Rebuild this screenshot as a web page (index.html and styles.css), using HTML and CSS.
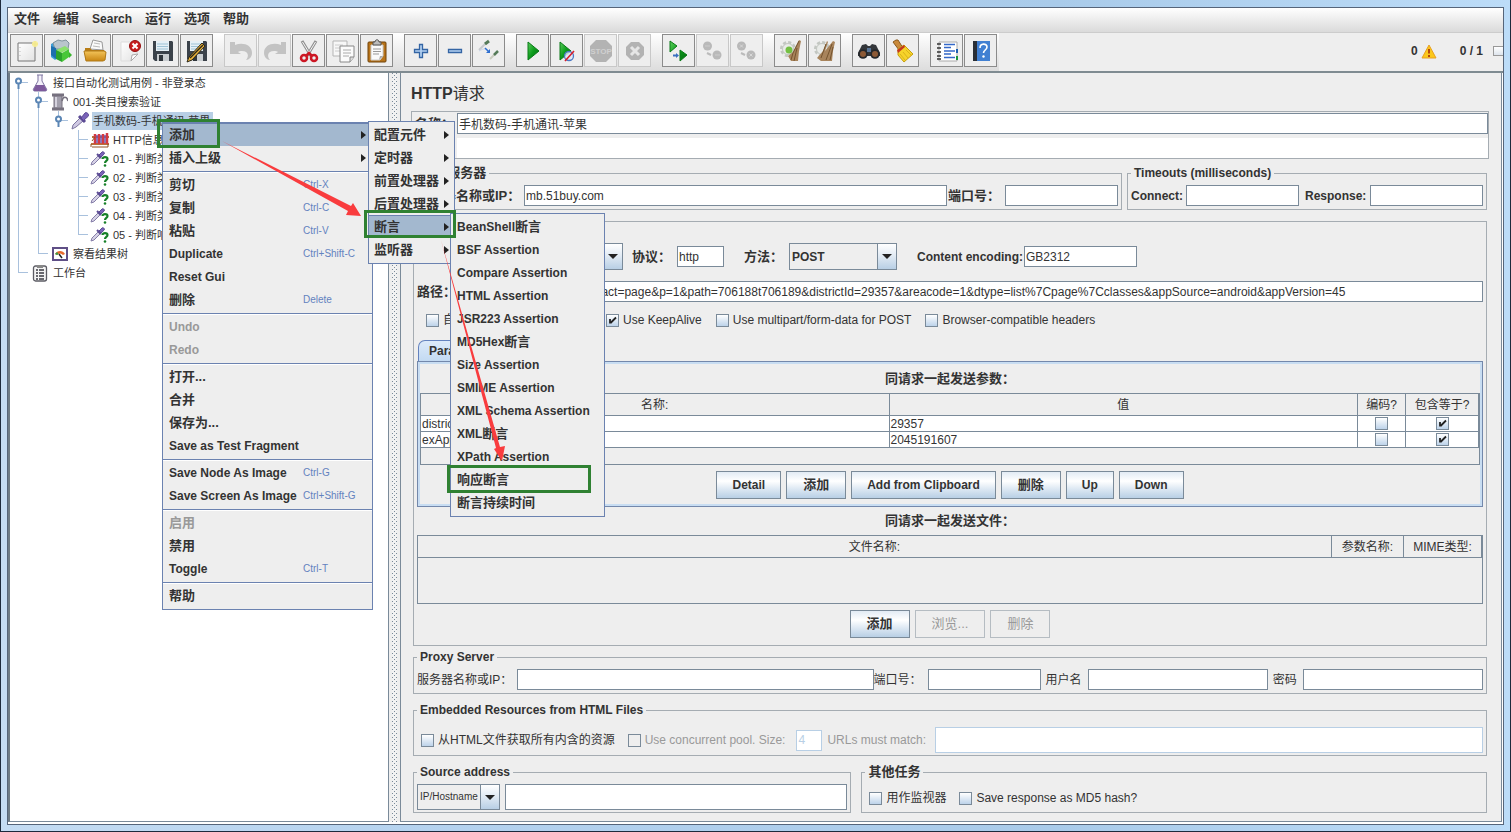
FILE: index.html
```
<!DOCTYPE html>
<html lang="zh-CN">
<head>
<meta charset="utf-8">
<title>HTTP请求</title>
<link rel="stylesheet" href="styles.css">
</head>
<body>
<svg width="0" height="0" class="defs" aria-hidden="true">
  <defs>
    <linearGradient id="gGreen" x1="0" y1="0" x2="1" y2="1"><stop offset="0" stop-color="#5ccf5c"/><stop offset=".5" stop-color="#0c9c1c"/><stop offset="1" stop-color="#056a10"/></linearGradient>
    <linearGradient id="gGold" x1="0" y1="0" x2="0" y2="1"><stop offset="0" stop-color="#f3c45a"/><stop offset="1" stop-color="#c98612"/></linearGradient>
    <linearGradient id="gPaper" x1="0" y1="0" x2="1" y2="1"><stop offset="0" stop-color="#ffffff"/><stop offset="1" stop-color="#e2e2e2"/></linearGradient>
    <symbol id="handle" viewBox="0 0 9 12"><circle cx="4.500" cy="4" r="2.500" fill="#fff" stroke="#5b86b5" stroke-width="2"/><path d="M4.500 7v5" stroke="#5b86b5" stroke-width="2"/></symbol>
    <symbol id="dropper" viewBox="0 0 18 18"><path d="M1 17l1-4 7-7 3 3-7 6z" fill="#cfc8e2" stroke="#7d75a0"/><path d="M8 4l6 6" stroke="#5b4a94" stroke-width="3"/><path d="M10 6l4-5c1-1.500 4.500 1 3.500 3l-5 4.500z" fill="#7a63b8" stroke="#5b4a94"/></symbol>
    <symbol id="assert" viewBox="0 0 20 16"><path d="M1 14l1-3 6-6 2 2-6 6z" fill="#d6d1e6" stroke="#857ea8"/><path d="M7 3l4 4" stroke="#5b4a94" stroke-width="2"/><path d="M9 4l3-3c1-1 3 .5 2.200 2L11 6z" fill="#7a63b8" stroke="#5b4a94"/><path d="M12.500 8c0-2.500 5-2.500 5 0 0 2-2.500 1.800-2.500 4" fill="none" stroke="#178028" stroke-width="2.200"/><circle cx="15" cy="14.500" r="1.300" fill="#178028"/></symbol>
    <symbol id="disk" viewBox="0 0 24 24"><path d="M2 2h19l1 1v19H4l-2-2z" fill="#3b424a"/><path d="M5 2h13v10H5z" fill="#e6f0f6"/><path d="M6 5h11M6 7.500h11M6 10h11" stroke="#9fc3d6"/><path d="M6 15h12v7H6z" fill="#c9cdd0"/><path d="M8 16h4v6H8z" fill="#30363c"/></symbol>
    <symbol id="gear" viewBox="0 0 24 24"><circle cx="9" cy="10" r="6.500" fill="#e4e7e2" stroke="#c3c7c2" stroke-width="3" stroke-dasharray="3 2"/><circle cx="9" cy="10" r="5.500" fill="#e9ebe8" stroke="#c3c7c2"/></symbol>
  </defs>
</svg>
<div class="window">
<div class="app">
  <nav class="menubar">
    <a href="#" class="zh">文件</a><a href="#" class="zh">编辑</a><a href="#">Search</a><a href="#" class="zh">运行</a><a href="#" class="zh">选项</a><a href="#" class="zh">帮助</a>
  </nav>
  <div class="toolbar">
    <div class="tools">
      <div class="group">
        <button aria-label="New"><svg viewBox="0 0 24 24"><path d="M3 4h17v18H3z" fill="url(#gPaper)" stroke="#777"/><path d="M5 8v12" stroke="#bbb" stroke-dasharray="1 3"/><circle cx="20" cy="5" r="3" fill="#f7ee9a"/><path d="M20 2v6M17 5h6" stroke="#f0e58a"/></svg></button>
        <button aria-label="Templates"><svg viewBox="0 0 24 24"><path d="M2 5l6-3 4 2-1 13-5 4-4-3z" fill="#3c9fd8"/><path d="M4 4l5-3 4 1 4-1 3 3-1 6H6z" fill="#b9c5cc" stroke="#7e929c"/><path d="M2 7l5 2v11l-5-4z" fill="#1c6fae"/><path d="M7 11l9-4 4 3-8 4z" fill="#8be06c"/><path d="M7 11l6 3v9l-6-3z" fill="#2ba32c"/><path d="M13 14l7-4v8l-7 5z" fill="#48c738"/><path d="M20 13l3 3-3 3z" fill="#39b52c"/></svg></button>
        <button aria-label="Open"><svg viewBox="0 0 24 24"><path d="M7 10l3-9 9 2 1 8z" fill="#fafafa" stroke="#999"/><path d="M11 4l6 1M10 7l7 1" stroke="#bbb"/><path d="M2 9h5l2 2h12l1 2v8H3l-1-2z" fill="#b87d16"/><path d="M1 12h20l2 1-1 8-2 1H3z" fill="url(#gGold)" stroke="#b07a18"/></svg></button>
        <button aria-label="Close"><svg viewBox="0 0 24 24"><path d="M4 3h16v13l-6 6H4z" fill="url(#gPaper)" stroke="#ddd"/><path d="M14 22l1-6 6-1z" fill="#fff" stroke="#aaa"/><circle cx="18" cy="7" r="5.500" fill="#c81e1e" stroke="#961010"/><path d="M15.500 4.500l5 5m0-5l-5 5" stroke="#fff" stroke-width="2"/></svg></button>
        <button aria-label="Save"><svg viewBox="0 0 24 24"><use href="#disk"/></svg></button>
        <button aria-label="Save as"><svg viewBox="0 0 24 24"><use href="#disk"/><path d="M2 23l2-5L17 4l3 3L7 21z" fill="#e9b23a" stroke="#2d2718"/><path d="M5 19L18 6" stroke="#2d2718" stroke-width="1.500"/></svg></button>
      </div>
      <div class="group">
        <button disabled aria-label="Undo"><svg viewBox="0 0 24 24"><path d="M1 3h5v3c8-3 17 0 17 8 0 4-3 7-6 7 3-3 3-9-4-9-2 0-3 0-4 1l3 2H1z" fill="#c3c3c3"/></svg></button>
        <button disabled aria-label="Redo"><svg viewBox="0 0 24 24"><path d="M23 3h-5v3C10 3 1 6 1 14c0 4 3 7 6 7-3-3-3-9 4-9 2 0 3 0 4 1l-3 2h11z" fill="#c3c3c3"/></svg></button>
        <button aria-label="Cut"><svg viewBox="0 0 24 24"><path d="M5 2l9 15M19 2l-9 15" stroke="#909090" stroke-width="3"/><path d="M5.500 3l8 13M18.500 3l-8 13" stroke="#f5f5f5"/><circle cx="7" cy="19" r="3" fill="none" stroke="#cc1724" stroke-width="2.500"/><circle cx="17" cy="19" r="3" fill="none" stroke="#cc1724" stroke-width="2.500"/><path d="M9 17l3-3 3 3" fill="none" stroke="#cc1724" stroke-width="2.500"/></svg></button>
        <button aria-label="Copy"><svg viewBox="0 0 24 24"><path d="M2 2h14v15H2z" fill="#f7f7f7" stroke="#b5b5b5"/><path d="M4 6h8M4 9h5M4 12h5" stroke="#ccc"/><path d="M9 7h14v11l-4 5H9z" fill="#fbfbfb" stroke="#888"/><path d="M12 11h8M12 14h8M12 17h6" stroke="#aaa"/><path d="M19 23v-5h4" fill="#ddd" stroke="#888"/></svg></button>
        <button aria-label="Paste"><svg viewBox="0 0 24 24"><rect x="3" y="3" width="18" height="20" rx="1" fill="#b8741a" stroke="#70430a"/><path d="M6 6h12v11l-3 4H6z" fill="#fafafa" stroke="#ccc"/><path d="M8 10h8M8 12.500h8M8 15h6" stroke="#999"/><path d="M14 21l1-4h3z" fill="#aaa"/><path d="M8 6V3h2c0-3 4-3 4 0h2v3z" fill="#bbb" stroke="#555"/></svg></button>
      </div>
      <div class="group">
        <button aria-label="Expand"><svg viewBox="0 0 24 24"><path d="M10.500 5.500h3v5h5v3h-5v5h-3v-5h-5v-3h5z" fill="#b4d2f2" stroke="#3465a4" stroke-width="1.300"/></svg></button>
        <button aria-label="Collapse"><svg viewBox="0 0 24 24"><path d="M5.500 10.500h13v3h-13z" fill="#b4d2f2" stroke="#3465a4" stroke-width="1.300"/></svg></button>
        <button aria-label="Toggle"><svg viewBox="0 0 24 24"><path d="M2 11l7-7" stroke="#c6c9cc" stroke-width="2"/><path d="M8 5l4-3" stroke="#557a58" stroke-width="3"/><path d="M2 12c5-3 7-2 9-1" fill="none" stroke="#c9d5e8"/><path d="M8 9l4 4" stroke="#2e6fd0" stroke-width="1.500"/><path d="M13 10v4H9z" fill="#2e6fd0"/><path d="M13 20l5-5" stroke="#c9ccbe" stroke-width="2"/><path d="M17 16l4-4" stroke="#557a58" stroke-width="2.500"/></svg></button>
      </div>
      <div class="group">
        <button aria-label="Start"><svg viewBox="0 0 24 24"><path d="M7 3l11 9-11 9z" fill="url(#gGreen)" stroke="#0a7a18"/></svg></button>
        <button aria-label="Start no pauses"><svg viewBox="0 0 24 24"><path d="M5 3l11 9-11 9z" fill="url(#gGreen)" stroke="#0a7a18"/><circle cx="14" cy="17" r="4.500" fill="#dfe8f8" fill-opacity=".8" stroke="#4a78c4" stroke-width="1.300"/><path d="M10 22l9-10" stroke="#d8202c" stroke-width="1.600"/></svg></button>
        <button disabled aria-label="Stop"><svg viewBox="0 0 24 24"><path d="M7 1h10l6 6v10l-6 6H7l-6-6V7z" fill="#b3b3b3"/><text x="12" y="15" class="stop-text">STOP</text></svg></button>
        <button disabled aria-label="Shutdown"><svg viewBox="0 0 24 24"><path d="M8 3h8l5 5v8l-5 5H8l-5-5V8z" fill="#b3b3b3"/><path d="M8 8l8 8m0-8l-8 8" stroke="#e6e6e6" stroke-width="3"/></svg></button>
      </div>
      <div class="group">
        <button aria-label="Remote start"><svg viewBox="0 0 24 24"><path d="M3 2l7 5-7 6zM13 11l7 5-7 6z" fill="url(#gGreen)" stroke="#0a7a18"/><path d="M6 16.500h4" stroke="#3a6fc0" stroke-width="2"/><path d="M9 14l3 2.500L9 19z" fill="#3a6fc0"/></svg></button>
        <button disabled aria-label="Remote stop"><svg viewBox="0 0 24 24"><circle cx="6.500" cy="7" r="4.500" fill="#b9b9b9"/><circle cx="16" cy="16" r="4.500" fill="#b9b9b9"/><path d="M4 7h5M14 16h5" stroke="#ccc"/><path d="M6 14l4 2" stroke="#bbb" stroke-width="2"/></svg></button>
        <button disabled aria-label="Remote shutdown"><svg viewBox="0 0 24 24"><circle cx="6.500" cy="7" r="4.500" fill="#b9b9b9"/><circle cx="16" cy="16" r="4.500" fill="#b9b9b9"/><path d="M5 5.500l3 3m0-3l-3 3M14.500 14.500l3 3m0-3l-3 3" stroke="#d8d8d8"/><path d="M6 14l4 2" stroke="#bbb" stroke-width="2"/></svg></button>
      </div>
      <div class="group">
        <button aria-label="Clear"><svg viewBox="0 0 24 24"><use href="#gear"/><circle cx="10" cy="11" r="3.500" fill="#74c043"/><path d="M20 1l2 1-2 10-1 10h-7l-3-5 5-4z" fill="#a8845c"/><path d="M20 2l-6 12-2 7M18 9l-3 13" stroke="#75542f" fill="none"/></svg></button>
        <button aria-label="Clear all"><svg viewBox="0 0 24 24"><use href="#gear"/><path d="M14 2l1 1-3 9 8-10 2 1-2 9-1 10H8l-4-3 6-7z" fill="#a8845c"/><path d="M13 5l-5 14M19 5l-6 16M20 8l-3 13" stroke="#75542f" fill="none"/></svg></button>
      </div>
      <div class="group">
        <button aria-label="Search"><svg viewBox="0 0 24 24"><path d="M5 6l4-1 2 2h2l2-2 4 1 4 8v3H1v-3z" fill="#33363a"/><circle cx="6" cy="15" r="4.800" fill="#26282b"/><circle cx="18" cy="15" r="4.800" fill="#26282b"/><circle cx="6" cy="15" r="3" fill="#8d5a36"/><circle cx="18" cy="15" r="3" fill="#8d5a36"/><path d="M10 9h4v4h-4z" fill="#5b7698"/></svg></button>
        <button aria-label="Reset search"><svg viewBox="0 0 24 24"><path d="M2 3l3-2h2l5 8-4 2z" fill="#c98a3c" stroke="#8a5a1c"/><path d="M7 10l6-4 9 9-9 8-6-7z" fill="#f6d32a" stroke="#c79f0e"/><path d="M6 11l7-5 1 2-7 6z" fill="#c4391e"/><path d="M12 13l5 6M15 11l5 5M9 15l5 6" stroke="#d9b31c"/></svg></button>
      </div>
      <div class="group">
        <button aria-label="Function helper"><svg viewBox="0 0 24 24"><path d="M4 3h18v19H4z" fill="#fff" stroke="#aaa"/><path d="M9 5.500h11M9 8.500h7M9 12h11M9 15h7M9 18.500h11" stroke="#3468c8" stroke-width="1.300"/><path d="M2 5h4M2 9h4M2 13h4M2 17h4M2 20h4" stroke="#333" stroke-width="1.500"/><path d="M22 10v4" stroke="#1d5fb2" stroke-width="2"/><path d="M22 17v4" stroke="#1a963c" stroke-width="2"/></svg></button>
        <button aria-label="Help"><svg viewBox="0 0 24 24"><path d="M4 2h17v20H4z" fill="#4180d2"/><path d="M4 2h4v20H4z" fill="#2a2f36"/><path d="M11 9c0-5 7-5 7-1 0 3-3.500 3-3.500 6" fill="none" stroke="#fff" stroke-width="1.600"/><circle cx="14.500" cy="17.500" r="1.200" fill="#fff"/></svg></button>
      </div>
    </div>
    <div class="status">
      <span>0</span>
      <svg class="warn" viewBox="0 0 16 16"><path d="M8 2l7 13H1z" fill="#fbc81a" stroke="#e8a020"/><path d="M8 6v4.500M8 12v2" stroke="#b5480c" stroke-width="2"/></svg>
      <span class="count">0 / 1</span>
      <span class="gauge"></span>
    </div>
  </div>
  <div class="split">
    <aside class="tree-pane">
      <ul class="tree">
        <li>
          <div class="node"><svg class="hd"><use href="#handle"/></svg><svg class="ic" viewBox="0 0 16 18"><path d="M5 1h6M6 1v6L1.500 15c-.5 1 0 2 1 2h11c1 0 1.500-1 1-2L10 7V1" fill="#f3f0fa" stroke="#7d75a0"/><path d="M4 11l-2.500 4.500c0 1 .5 1.500 1 1.500h11c1 0 1.500-1 1-1.500L12 11z" fill="#7d5a9c"/></svg><span>接口自动化测试用例 - 非登录态</span></div>
          <ul>
            <li>
              <div class="node"><svg class="hd"><use href="#handle"/></svg><svg class="ic" viewBox="0 0 16 18"><path d="M0 2h12M0 16h12" stroke="#76717f" stroke-width="3"/><path d="M2 3h8v12H2z" fill="#a29fac" stroke="#76717f"/><path d="M4 4v10" stroke="#d5d2de" stroke-width="2"/><path d="M10 8c1-5 5-5 6 0" fill="none" stroke="#76717f" stroke-width="1.500"/></svg><span>001-类目搜索验证</span></div>
              <ul>
                <li>
                  <div class="node"><svg class="hd"><use href="#handle"/></svg><svg class="ic big"><use href="#dropper"/></svg><span class="picked">手机数码-手机通讯-苹果</span></div>
                  <ul>
                    <li><div class="node"><i class="hd"></i><svg class="ic wide" viewBox="0 0 20 16"><path d="M2 5h17M1 12h18" stroke="#b9703a" stroke-width="2"/><path d="M5 2v10M9 2v10M13 2v10M17 1v11" stroke="#d23a44" stroke-width="2.500"/><path d="M7 3v8M11 3v8M15 3v8" stroke="#6f58b0" stroke-width="1.500"/><path d="M1 12v3M18 12v3M2 15h16M2 9l3-4" stroke="#8f5122"/></svg><span>HTTP信息头</span></div></li>
                    <li><div class="node"><i class="hd"></i><svg class="ic wide"><use href="#assert"/></svg><span>01 - 判断类</span></div></li>
                    <li><div class="node"><i class="hd"></i><svg class="ic wide"><use href="#assert"/></svg><span>02 - 判断类</span></div></li>
                    <li><div class="node"><i class="hd"></i><svg class="ic wide"><use href="#assert"/></svg><span>03 - 判断类</span></div></li>
                    <li><div class="node"><i class="hd"></i><svg class="ic wide"><use href="#assert"/></svg><span>04 - 判断类</span></div></li>
                    <li><div class="node"><i class="hd"></i><svg class="ic wide"><use href="#assert"/></svg><span>05 - 判断响</span></div></li>
                  </ul>
                </li>
              </ul>
            </li>
            <li><div class="node"><i class="hd"></i><svg class="ic" viewBox="0 0 16 14"><path d="M1 1h14v12H1z" fill="#fff" stroke="#5f4f86" stroke-width="2"/><path d="M3 7c2-4 8-4 10 0l-2 1c-2-2-4-2-6 0z" fill="#e86a2c"/><path d="M3 7l2-2 1.500 2L5 8z" fill="#33a047"/><path d="M7 7l3 4" stroke="#222" stroke-width="1.500"/></svg><span>察看结果树</span></div></li>
          </ul>
        </li>
        <li><div class="node"><i class="hd"></i><svg class="ic" viewBox="0 0 16 18"><rect x="1.500" y="2" width="13" height="15" rx="2" fill="#f4f4f4" stroke="#5c5c64" stroke-width="1.300"/><path d="M4 6h2M4 9h2M4 12h2M4 15h2M7 6h5M7 9h5M7 12h5M7 15h5" stroke="#3a3a42" stroke-width="1.500"/><path d="M5 1h6v3H5z" fill="#888"/></svg><span>工作台</span></div></li>
      </ul>
    </aside>
    <div class="divider"></div>
    <main class="editor">
      <div class="head">
        <h1>HTTP<span>请求</span></h1>
        <div class="name-box">
          <div class="row"><label class="zh" for="name">名称：</label><input id="name" class="grow" value="手机数码-手机通讯-苹果"></div>
          <div class="row"><label class="zh" for="note"></label><input id="note" class="grow bare" aria-label="注释"></div>
        </div>
      </div>
      <div class="body">
        <div class="pair first">
          <fieldset class="grow">
            <legend class="zh">Web服务器</legend>
            <div class="row"><label class="zh l-server" for="host">服务器名称或IP：</label><input id="host" class="grow" value="mb.51buy.com"><label class="zh l-port" for="port">端口号：</label><input id="port" class="short"></div>
          </fieldset>
          <fieldset>
            <legend>Timeouts (milliseconds)</legend>
            <div class="row"><label class="l-conn" for="conn">Connect:</label><input id="conn" class="short"><label class="l-resp" for="resp">Response:</label><input id="resp" class="short"></div>
          </fieldset>
        </div>
        <fieldset class="request">
          <legend></legend>
          <div class="row proto">
            <select class="w-impl" aria-label="Implementation"><option></option></select>
            <label class="zh l-proto" for="proto">协议：</label><input id="proto" class="tiny" value="http">
            <label class="zh l-method" for="method">方法：</label><select id="method" class="w-method"><option>POST</option></select>
            <label class="l-enc" for="enc">Content encoding:</label><input id="enc" class="short" value="GB2312">
          </div>
          <div class="row path"><label class="zh l-path" for="path">路径：</label><input id="path" class="grow" value="/json.php?mod=searchlist&amp;act=page&amp;p=1&amp;path=706188t706189&amp;districtId=29357&amp;areacode=1&amp;dtype=list%7Cpage%7Cclasses&amp;appSource=android&amp;appVersion=45"></div>
          <div class="row checks">
            <label class="chk fixed"><input type="checkbox">自动重定向</label>
            <label class="chk"><input type="checkbox" checked>Use KeepAlive</label>
            <label class="chk"><input type="checkbox">Use multipart/form-data for POST</label>
            <label class="chk"><input type="checkbox">Browser-compatible headers</label>
          </div>
          <div class="tabs"><button class="tab">Parameters</button></div>
          <div class="tab-panel">
            <h2 class="zh">同请求一起发送参数：</h2>
            <div class="table-box params">
              <table>
                <colgroup><col><col><col class="c-enc"><col class="c-inc"></colgroup>
                <thead><tr><th>名称:</th><th>值</th><th>编码?</th><th>包含等于?</th></tr></thead>
                <tbody>
                  <tr><td>districtId</td><td>29357</td><td class="mid"><input type="checkbox" aria-label="编码"></td><td class="mid"><input type="checkbox" checked aria-label="包含等于"></td></tr>
                  <tr><td>exAppTag</td><td>2045191607</td><td class="mid"><input type="checkbox" aria-label="编码"></td><td class="mid"><input type="checkbox" checked aria-label="包含等于"></td></tr>
                </tbody>
              </table>
            </div>
            <div class="buttons"><button class="btn">Detail</button><button class="btn zh">添加</button><button class="btn">Add from Clipboard</button><button class="btn zh">删除</button><button class="btn">Up</button><button class="btn">Down</button></div>
          </div>
          <h2 class="zh files-title">同请求一起发送文件：</h2>
          <div class="table-box files">
            <table>
              <colgroup><col><col class="c-par"><col class="c-mime"></colgroup>
              <thead><tr><th>文件名称:</th><th>参数名称:</th><th>MIME类型:</th></tr></thead>
            </table>
          </div>
          <div class="buttons"><button class="btn zh">添加</button><button class="btn zh" disabled>浏览...</button><button class="btn zh" disabled>删除</button></div>
        </fieldset>
        <fieldset class="proxy">
          <legend>Proxy Server</legend>
          <div class="row plain"><label class="l-phost" for="phost">服务器名称或IP：</label><input id="phost" class="grow2"><label class="l-pport" for="pport">端口号：</label><input id="pport" class="short"><label class="l-user" for="user">用户名</label><input id="user" class="grow"><label class="l-pass" for="pass">密码</label><input id="pass" class="grow"></div>
        </fieldset>
        <fieldset class="embedded">
          <legend>Embedded Resources from HTML Files</legend>
          <div class="row plain">
            <label class="chk"><input type="checkbox">从HTML文件获取所有内含的资源</label>
            <label class="chk off"><input type="checkbox" disabled>Use concurrent pool. Size:</label>
            <input class="pool" value="4" disabled aria-label="Size">
            <label class="off l-url" for="url">URLs must match:</label><input id="url" class="grow tall" disabled>
          </div>
        </fieldset>
        <div class="pair last">
          <fieldset class="source">
            <legend>Source address</legend>
            <div class="row"><select class="w-src" aria-label="Source type"><option>IP/Hostname</option></select><input class="grow tall" aria-label="Source address"></div>
          </fieldset>
          <fieldset class="other">
            <legend class="zh">其他任务</legend>
            <div class="row plain">
              <label class="chk"><input type="checkbox">用作监视器</label>
              <label class="chk"><input type="checkbox">Save response as MD5 hash?</label>
            </div>
          </fieldset>
        </div>
      </div>
    </main>
  </div>
</div>

<div class="popup context">
  <button class="zh sub on">添加</button><button class="zh sub">插入上级</button>
  <hr>
  <button class="zh">剪切<kbd>Ctrl-X</kbd></button><button class="zh">复制<kbd>Ctrl-C</kbd></button><button class="zh">粘贴<kbd>Ctrl-V</kbd></button><button>Duplicate<kbd>Ctrl+Shift-C</kbd></button><button>Reset Gui</button><button class="zh">删除<kbd>Delete</kbd></button>
  <hr>
  <button disabled>Undo</button><button disabled>Redo</button>
  <hr>
  <button class="zh">打开...</button><button class="zh">合并</button><button class="zh">保存为...</button><button>Save as Test Fragment</button>
  <hr>
  <button>Save Node As Image<kbd>Ctrl-G</kbd></button><button>Save Screen As Image<kbd>Ctrl+Shift-G</kbd></button>
  <hr>
  <button class="zh" disabled>启用</button><button class="zh">禁用</button><button>Toggle<kbd>Ctrl-T</kbd></button>
  <hr>
  <button class="zh">帮助</button>
</div>
<div class="popup add-menu">
  <button class="zh sub">配置元件</button><button class="zh sub">定时器</button><button class="zh sub">前置处理器</button><button class="zh sub">后置处理器</button><button class="zh sub on">断言</button><button class="zh sub">监听器</button>
</div>
<div class="popup assert-menu">
  <button>BeanShell<span class="zh">断言</span></button><button>BSF Assertion</button><button>Compare Assertion</button><button>HTML Assertion</button><button>JSR223 Assertion</button><button>MD5Hex<span class="zh">断言</span></button><button>Size Assertion</button><button>SMIME Assertion</button><button>XML Schema Assertion</button><button>XML<span class="zh">断言</span></button><button>XPath Assertion</button><button class="zh">响应断言</button><button class="zh">断言持续时间</button>
</div>
<svg class="marks" width="620" height="520" viewBox="0 0 620 520" aria-hidden="true">
  <path d="M222 141L351 206 353 203 361 216 346 215 348 211z" fill="#f93c3e"/>
  <path d="M441 240L500 447 505 446 502 461 494 449 496 448z" fill="#f93c3e"/>
  <g fill="none" stroke="#2f8132" stroke-width="3"><path d="M158.500 120.500h60v26h-60zM365.500 211.500h89v25h-89zM448.500 466.500h141v25h-141z"/></g>
</svg>
</div>
</body>
</html>
```

FILE: styles.css
```
* { box-sizing: border-box; }
body {
  margin: 0;
  font: 12px/14px "Liberation Sans", "Noto Sans CJK SC", sans-serif;
  color: #333;
}
button, input, select { font: inherit; color: inherit; margin: 0; border-radius: 0; }
button { cursor: default; }
h1, h2, ul, fieldset, legend { margin: 0; padding: 0; }
ul { list-style: none; }
.defs { display: block; }
.zh { font-size: 13px; }

.window {
  position: relative;
  display: flex;
  min-height: 100vh;
  padding: 7px 6px 6px;
  border: 1px solid #1d2a3c;
  border-top: 0;
  background: linear-gradient(90deg, #c4dcf3, #b4d2ef 30%, #a9cbea 70%, #bcdcf8);
}
.app {
  flex: 1;
  min-width: 0;
  display: flex;
  flex-direction: column;
  border: 1px solid #56657a;
  background: #fff;
}

/* menu bar and toolbar */
.menubar {
  display: flex;
  gap: 13px;
  height: 25px;
  padding: 4px 6px;
  border-bottom: 1px solid #ccc;
  background: linear-gradient(#fff, #dadada);
}
.menubar a { color: #333; font-weight: bold; text-decoration: none; }
.toolbar {
  display: flex;
  justify-content: space-between;
  height: 40px;
  background: #eee;
  border-bottom: 2px solid #7f8b91;
}
.tools {
  display: flex;
  gap: 11px;
  padding: 1px 2px 4px;
  background: linear-gradient(#fff, #dcdcdc);
}
.group { display: flex; gap: 1px; }
.group button {
  width: 33px;
  height: 33px;
  padding: 0;
  border: 1px solid #8b8b8b;
  background: #eee;
  display: grid;
  place-items: center;
}
.group button:disabled { border-color: #c8c8c8; }
.group svg { width: 24px; height: 24px; }
.stop-text { font: bold 8px "Liberation Sans", sans-serif; fill: #d0d0d0; text-anchor: middle; }
.status { display: flex; align-items: center; padding-bottom: 2px; font-weight: bold; }
.warn { width: 16px; height: 16px; margin: 0 23px 0 3px; }
.gauge { width: 10px; height: 10px; margin-left: 10px; border: 1px solid #999; border-right: 0; background: linear-gradient(#fff, #dde4ec); }

/* split panes */
.split { flex: 1; display: flex; padding: 0 1px 2px 0; }
.tree-pane {
  width: 381px;
  border: 1px solid #7a8a99;
  border-left: 2px solid #6f7c86;
  border-top: 0;
  background: #fff;
}
.divider {
  width: 11px;
  border: solid #eee;
  border-width: 0 3px;
  background: #f2f2f2 url("data:image/svg+xml,%3Csvg xmlns='http://www.w3.org/2000/svg' width='4' height='4'%3E%3Cpath d='M0 0h1v1H0zM2 2h1v1H2z' fill='%237a8a99'/%3E%3C/svg%3E");
}
.editor { flex: 1; min-width: 0; border: 1px solid #7a8a99; border-top: 0; background: #eee; }

/* test plan tree */
.tree { font-size: 11px; }
.tree ul { padding-left: 20px; }
.tree li {
  background:
    linear-gradient(#a9c1dd, #a9c1dd) 8px 0 / 1px 100% no-repeat,
    linear-gradient(#a9c1dd, #a9c1dd) 8px 9px / 10px 1px no-repeat;
}
.tree li:last-child {
  background:
    linear-gradient(#a9c1dd, #a9c1dd) 8px 0 / 1px 10px no-repeat,
    linear-gradient(#a9c1dd, #a9c1dd) 8px 9px / 10px 1px no-repeat;
}
.tree > li:first-child { background-position: 8px 9px; }
.node { display: flex; align-items: center; height: 19px; white-space: nowrap; }
.hd { width: 9px; height: 12px; margin: 0 9px 0 4px; }
.ic { width: 16px; height: 18px; margin-right: 4px; }
.ic.big { width: 18px; margin: 0 3px 0 -1px; }
.ic.wide { width: 20px; margin: 0 2px 0 -2px; }
.node span { line-height: 18px; padding: 0 1px; }
.node .picked { background: #b8cfe5; padding-right: 3px; }

/* editor */
.head { padding: 11px 12px 0 10px; }
h1 { font-size: 16px; line-height: 20px; }
h1 span { font-weight: normal; }
.name-box { margin-top: 7px; padding: 1px 0 0; border: 1px solid #a5acb2; }
.name-box label { width: 45px; padding-left: 3px; }
.name-box .row + .row { margin-top: 4px; }
.body { padding: 7px 14px 8px 12px; }
.row { display: flex; align-items: center; white-space: nowrap; }
.grow { flex: 1; min-width: 0; }
.grow2 { flex: 2; min-width: 0; }
label { font-weight: bold; }
.plain label, .chk { font-weight: normal; }
input:not([type=checkbox]) {
  height: 21px;
  padding: 0 1px;
  border: 1px solid #7a8a99;
  background: #fff;
}
input.bare:not([type=checkbox]) { height: 20px; border: 0; }
input.tall:not([type=checkbox]) { height: 26px; }
input:disabled:not([type=checkbox]) { border-color: #b8cfe5; color: #b8cfe5; }
input.short { width: 113px; }
input.tiny { width: 47px; }
input.pool { width: 26px; margin: 0 5px 0 11px; }
.off { color: #999; }
input[type=checkbox] {
  appearance: none;
  width: 13px;
  height: 13px;
  border: 1px solid #7a8a99;
  background: linear-gradient(#fff, #bdd3ea);
}
input[type=checkbox]:checked {
  background: url("data:image/svg+xml,%3Csvg xmlns='http://www.w3.org/2000/svg' viewBox='0 0 11 11'%3E%3Cpath d='M3 4v4.500M3.500 8L9 2.500' fill='none' stroke='%23222' stroke-width='1.800'/%3E%3C/svg%3E"), linear-gradient(#fff, #bdd3ea);
}
input[type=checkbox]:disabled { background: #eee; }
.chk { display: flex; align-items: center; gap: 4px; }

select {
  appearance: none;
  height: 27px;
  padding: 0 2px;
  border: 1px solid #7a8a99;
  font-weight: bold;
  background:
    url("data:image/svg+xml,%3Csvg xmlns='http://www.w3.org/2000/svg' viewBox='0 0 10 5'%3E%3Cpath d='M0 0h10L5 5z' fill='%23222'/%3E%3C/svg%3E") right 4px center / 10px 5px no-repeat,
    linear-gradient(#7a8a99, #7a8a99) right 18px top / 1px 100% no-repeat,
    linear-gradient(#fff, #dfe9f3 50%, #b8cfe5) right / 18px 100% no-repeat,
    #eee;
}

fieldset { min-width: 0; padding: 0 3px 3px; border: 1px solid #a5acb2; }
legend { padding: 0 3px; line-height: 14px; font-weight: bold; }
fieldset > .row { padding-top: 5px; }
.pair { display: flex; gap: 5px; }
.l-server { width: 107px; }
.l-port { width: 58px; padding-left: 1px; }
.l-conn { width: 55px; }
.l-resp { width: 71px; padding-left: 6px; }

.request { margin-top: 4px; padding-bottom: 7px; }
.request legend { width: 60px; height: 14px; }
fieldset > .proto { padding-top: 15px; }
.w-impl { width: 114px; margin-left: 92px; }
.l-proto { width: 54px; padding-left: 9px; }
.l-method { width: 65px; padding-left: 20px; }
.w-method { width: 108px; }
.l-enc { width: 127px; padding-left: 20px; }
fieldset > .path { padding-top: 11px; }
.l-path { width: 38px; }
fieldset > .checks { padding: 11px 0 0 9px; gap: 14px; }
.chk.fixed { width: 166px; }

.tabs { margin-top: 13px; padding-left: 1px; height: 21px; }
.tab {
  height: 21px;
  padding: 0 10px;
  border: 1px solid #6382bf;
  border-bottom: 0;
  border-radius: 7px 0 0 0;
  background: linear-gradient(#dceafa, #c3daf2);
  font-weight: bold;
}
.tab-panel { padding: 9px 0 7px; border: 1px solid #7388ab; box-shadow: inset 0 0 0 2px #c8ddf2; }
.tab-panel > * { margin-left: 2px; margin-right: 2px; }
h2 { font-weight: bold; line-height: 14px; text-align: center; }
.tab-panel h2 { padding-top: 1px; }
.files-title { margin-top: 7px; }
.table-box { margin-top: 7px; border: 1px solid #7a8a99; }
.params { height: 72px; }
.files { height: 69px; }
table { width: 100%; border-spacing: 0; table-layout: fixed; }
th { height: 22px; padding: 0; font-weight: normal; border: solid #7a8a99; border-width: 0 1px 1px 0; }
td { height: 16px; padding: 0 1px; line-height: 14px; background: #fff; border: solid #7a8a99; border-width: 0 1px 1px 0; }
.mid { text-align: center; line-height: 0; }
.mid input { vertical-align: middle; }
.c-enc { width: 48px; }
.c-inc { width: 73px; }
.c-par { width: 72px; }
.c-mime { width: 78px; }
.buttons { display: flex; justify-content: center; gap: 5px; margin-top: 6px; }
.btn {
  height: 28px;
  padding: 0 15px;
  border: 1px solid #7a8a99;
  background: linear-gradient(#e2ebf4, #fff 35%, #dde8f3 65%, #b8cfe5);
  font-weight: bold;
}
.btn.zh { padding: 0 16px; font-size: 13px; }
.btn:disabled { color: #999; border-color: #b5bcc2; background: #eee; font-weight: normal; }

.proxy { margin-top: 4px; }
.l-phost { width: 100px; }
.l-pport { width: 54px; }
.l-user { width: 47px; padding-left: 5px; }
.l-pass { width: 35px; padding-left: 5px; }
.embedded, .source, .other { padding-bottom: 2px; }
.embedded { margin-top: 9px; }
.embedded > .row { padding: 10px 0 0 4px; }
.embedded .chk + .chk { margin-left: 13px; }
.l-url { width: 108px; }
.last { margin-top: 9px; gap: 10px; }
.source { flex: 437; }
.other { flex: 627; }
.other > .row { gap: 13px; padding: 12px 0 0 4px; }
.source .row { gap: 5px; }
.w-src { width: 83px; height: 26px; font-size: 10px; font-weight: normal; }

/* popup menus */
.popup { position: absolute; border: 1px solid #6b82b0; background: #eee; }
.popup button {
  display: flex;
  align-items: center;
  width: 100%;
  height: 23px;
  padding: 0 6px;
  border: 0;
  background: none;
  font-weight: bold;
  white-space: nowrap;
}
.popup button.zh { font-size: 13px; }
.popup button:disabled { color: #999; }
.popup hr { height: 4px; margin: 0; border: 0; background: linear-gradient(#eee 2px, #6b82b0 2px, #6b82b0 3px, #fff 3px); }
.popup button.on { background: #a3b8cf; box-shadow: inset 0 1px #6b82b0; }
.popup .sub { justify-content: space-between; }
.popup .sub::after { content: ""; border: solid transparent; border-width: 4px 0 4px 5px; border-left-color: #222; }
kbd { position: absolute; left: 140px; font: 10px/14px "Liberation Sans", sans-serif; color: #6382bf; }
.context { left: 161px; top: 122px; width: 211px; padding-bottom: 2px; }
.add-menu { left: 367px; top: 121px; width: 87px; padding: 1px 0 2px; }
.add-menu button { padding: 0 5px; }
.assert-menu { left: 449px; top: 213px; width: 155px; padding: 1px 0 2px; }
.marks { position: absolute; left: -1px; top: 0; pointer-events: none; }
```
